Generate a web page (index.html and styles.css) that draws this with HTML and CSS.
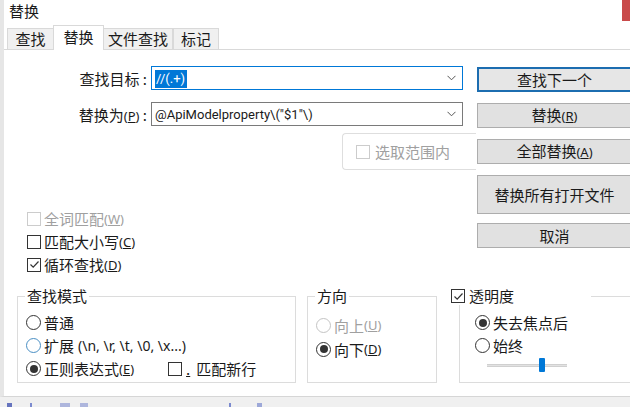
FILE: index.html
```html
<!DOCTYPE html>
<html lang="zh-CN">
<head>
    <meta charset="UTF-8">
    <title>替换</title>
    <link rel="stylesheet" href="styles.css">
</head>
<body>
    <div class="dialog">
        <!-- Title -->
        <div class="titlebar">
            <span class="title">替换</span>
            <span class="close"></span>
        </div>

        <!-- Tabs -->
        <div class="tabs">
            <div class="tab tab-find">查找</div>
            <div class="tab tab-replace active">替换</div>
            <div class="tab tab-files">文件查找</div>
            <div class="tab tab-mark">标记</div>
        </div>

        <div class="panel">
            <div class="main">
                <div class="left">
                    <div class="fields">
                        <div class="field">
                            <label class="field-label">查找目标 :</label>
                            <div class="combo focus">
                                <span class="combo-text"><span class="sel">//(.+)</span></span>
                                <svg class="chevron" width="9" height="6" viewBox="0 0 9 6"><path d="M0.5 0.8 L4.5 4.8 L8.5 0.8" fill="none" stroke="#555" stroke-width="1"/></svg>
                            </div>
                        </div>
                        <div class="field">
                            <label class="field-label">替换为<span class="key">(<u>P</u>)</span> :</label>
                            <div class="combo">
                                <span class="combo-text">@ApiModelproperty\("$1"\)</span>
                                <svg class="chevron" width="9" height="6" viewBox="0 0 9 6"><path d="M0.5 0.8 L4.5 4.8 L8.5 0.8" fill="none" stroke="#555" stroke-width="1"/></svg>
                            </div>
                        </div>
                    </div>

                    <div class="scope">
                        <div class="option disabled"><span class="box"></span>选取范围内</div>
                    </div>

                    <div class="checks">
                        <div class="option disabled"><span class="box"></span>全词匹配<span class="key">(<u>W</u>)</span></div>
                        <div class="option"><span class="box"></span>匹配大小写<span class="key">(<u>C</u>)</span></div>
                        <div class="option"><span class="box checked"><svg width="11" height="11" viewBox="0 0 11 11"><path d="M1.5 5.5 L4.2 8.2 L9.5 2.5" fill="none" stroke="#333" stroke-width="1.2"/></svg></span>循环查找<span class="key">(<u>D</u>)</span></div>
                    </div>
                </div>

                <div class="buttons">
                    <button class="btn default">查找下一个</button>
                    <button class="btn">替换<span class="key">(<u>R</u>)</span></button>
                    <button class="btn">全部替换<span class="key">(<u>A</u>)</span></button>
                    <button class="btn tall">替换所有打开文件</button>
                    <button class="btn cancel">取消</button>
                </div>
            </div>

            <div class="groups">
                <fieldset class="group group-mode">
                    <legend>查找模式</legend>
                    <div class="option"><span class="radio"></span>普通</div>
                    <div class="option"><span class="radio hover"></span>扩展 <span class="hint">(\n, \r, \t, \0, \x...)</span></div>
                    <div class="option">
                        <span class="radio on"></span>正则表达式<span class="key">(<u>E</u>)</span>
                        <span class="newline"><span class="box"></span><u class="dot">.</u>匹配新行</span>
                    </div>
                </fieldset>

                <fieldset class="group group-dir">
                    <legend>方向</legend>
                    <div class="option disabled"><span class="radio"></span>向上<span class="key">(<u>U</u>)</span></div>
                    <div class="option"><span class="radio on"></span>向下<span class="key">(<u>D</u>)</span></div>
                </fieldset>

                <fieldset class="group group-alpha">
                    <legend><span class="box checked"><svg width="11" height="11" viewBox="0 0 11 11"><path d="M1.5 5.5 L4.2 8.2 L9.5 2.5" fill="none" stroke="#333" stroke-width="1.2"/></svg></span>透明度</legend>
                    <div class="option"><span class="radio on"></span>失去焦点后</div>
                    <div class="option"><span class="radio"></span>始终</div>
                    <div class="slider">
                        <div class="track"></div>
                        <div class="thumb"></div>
                    </div>
                </fieldset>
            </div>
        </div>
    </div>

    <div class="statusbar">
        <span class="mark m1"></span>
        <span class="mark m2"></span>
        <span class="mark m3"></span>
        <span class="mark m4"></span>
        <span class="mark m5"></span>
        <span class="mark m6"></span>
    </div>
</body>
</html>
```

FILE: styles.css
```css
* {
    box-sizing: border-box;
}

body {
    margin: 0;
    width: 630px;
    height: 407px;
    overflow: hidden;
    background: #fff;
    color: #1a1a1a;
    font-family: "Noto Sans CJK SC", "Noto Sans", sans-serif;
    font-size: 15px;
}

.dialog {
    height: 397px;
    border-left: 4px solid #e6e6e6;
    border-bottom: 1px solid #d6d6d6;
}

/* title */
.titlebar {
    height: 25px;
    display: flex;
    align-items: flex-start;
}

.title {
    padding: 1px 0 0 5px;
    line-height: 20px;
}

.close {
    margin-left: auto;
    width: 8px;
    height: 21px;
    background: #c94a4a;
}

/* tabs */
.tabs {
    display: flex;
    align-items: flex-end;
    height: 25px;
    padding-left: 3px;
    border-bottom: 1px solid #d9d9d9;
}

.tab {
    height: 21px;
    border: 1px solid #d9d9d9;
    border-bottom: none;
    background: #f0f0f0;
    text-align: center;
    line-height: 19px;
}

.tab-find { width: 47px; }
.tab-replace { width: 51px; }
.tab-files { width: 70px; }
.tab-mark { width: 46px; }

.tab.active {
    height: 25px;
    margin: 0 -1px -1px;
    background: #fff;
    line-height: 21px;
    position: relative;
}

/* top area */
.panel {
    padding-top: 16px;
}

.main {
    display: flex;
}

.left {
    width: 472px;
    flex-shrink: 0;
}

.fields {
    display: flex;
    flex-direction: column;
    gap: 12px;
}

.field {
    display: flex;
    align-items: center;
    height: 24px;
}

.field-label {
    width: 147px;
    padding-right: 4px;
    text-align: right;
    white-space: nowrap;
}

.combo {
    width: 312px;
    height: 24px;
    display: flex;
    align-items: center;
    padding: 0 5px 0 3px;
    border: 1px solid #7a7a7a;
    font-family: Roboto, "Noto Sans", sans-serif;
    font-size: 13px;
}

.combo.focus {
    border-color: #0078d7;
}

.combo-text {
    flex: 1;
    white-space: nowrap;
}

.sel {
    background: #0078d7;
    color: #fff;
    padding: 1px 2px 2px 1px;
}

.chevron {
    margin-right: 1px;
}

.key {
    font-family: "Noto Sans", sans-serif;
    font-size: 13px;
}

.scope {
    margin: 7px 0 0 auto;
    width: 134px;
    height: 37px;
    display: flex;
    align-items: center;
    padding-left: 13px;
    border: 1px solid #dedede;
    border-right: none;
    border-radius: 4px 0 0 4px;
}

.scope .box {
    margin-right: 5px;
}

.checks {
    margin-top: 37px;
    padding-left: 23px;
}

/* options */
.option {
    display: flex;
    align-items: center;
    height: 23px;
    white-space: nowrap;
}

.option.disabled {
    color: #a0a0a0;
}

.box {
    width: 14px;
    height: 14px;
    margin-right: 3px;
    border: 1px solid #333;
    background: #fff;
    display: inline-flex;
    align-items: center;
    justify-content: center;
    flex-shrink: 0;
}

.disabled .box {
    border-color: #cccccc;
}

.radio {
    width: 15px;
    height: 15px;
    margin-right: 3px;
    border: 1px solid #333;
    border-radius: 50%;
    display: inline-flex;
    align-items: center;
    justify-content: center;
    flex-shrink: 0;
}

.radio.on::after {
    content: "";
    width: 8px;
    height: 8px;
    border-radius: 50%;
    background: #333;
}

.radio.hover {
    border-color: #4a8fc4;
}

.disabled .radio {
    border-color: #c4c4c4;
}

.hint {
    margin-left: 4px;
    font-family: "Noto Sans", sans-serif;
    font-size: 14px;
}

.newline {
    display: inline-flex;
    align-items: center;
    margin-left: 34px;
}

.newline .box {
    margin-right: 4px;
}

.dot {
    margin-right: 6px;
}

/* buttons */
.buttons {
    width: 156px;
    flex-shrink: 0;
    padding: 1px 0 0 1px;
    display: flex;
    flex-direction: column;
    gap: 11px;
}

.btn {
    height: 25px;
    padding: 0;
    border: 1px solid #adadad;
    background: #e1e1e1;
    color: #1a1a1a;
    font-family: "Noto Sans CJK SC", "Noto Sans", sans-serif;
    font-size: 15px;
    line-height: 20px;
}

.btn.default {
    border: 2px solid #1c6db0;
    background: #e6e6e6;
}

.btn.tall {
    height: 39px;
}

.btn.cancel {
    margin-top: -2px;
}

/* groups */
.groups {
    display: flex;
    margin-top: 11px;
    padding-left: 13px;
}

.group {
    flex-shrink: 0;
    margin: 0;
    height: 96px;
    padding: 0 0 0 8px;
    border: 1px solid #dcdcdc;
    min-width: 0;
}

/* legend sits inside the fieldset padding, so pull it back */
.group legend {
    margin-left: -1px;
    padding: 0 2px;
    line-height: 18px;
}

.group-mode {
    width: 279px;
    padding-top: 6px;
}

.group-dir {
    width: 130px;
    margin-left: 11px;
    padding-top: 8px;
}

.group-dir .option {
    height: 24px;
}

.group-alpha {
    width: 200px;
    margin-left: 22px;
    padding: 6px 0 0 15px;
}

.group-alpha legend {
    margin-left: -24px;
    width: 140px;
    padding: 0;
    display: flex;
    align-items: center;
}

.group-alpha legend .box {
    margin-right: 4px;
}

.slider {
    position: relative;
    width: 80px;
    height: 14px;
    margin: 1px 0 0 12px;
}

.track {
    position: absolute;
    top: 6px;
    left: 0;
    right: 0;
    height: 3px;
    background: #e2e2e2;
    border: 1px solid #d0d0d0;
    border-width: 1px 0;
}

.thumb {
    position: absolute;
    top: 0;
    left: 52px;
    width: 6px;
    height: 14px;
    background: #0078d7;
    border-radius: 1px;
}

/* bottom strip */
.statusbar {
    height: 10px;
    background: #f0f0f0;
    position: relative;
}

.mark {
    position: absolute;
    bottom: 0;
    height: 4px;
    background: #4a5fc0;
    opacity: 0.7;
}

.m1 { left: 7px; width: 5px; background: #2b3fa8; }
.m2 { left: 30px; width: 2px; }
.m3 { left: 60px; width: 10px; opacity: 0.4; }
.m4 { left: 80px; width: 8px; opacity: 0.4; }
.m5 { left: 229px; width: 2px; }
.m6 { left: 257px; width: 5px; opacity: 0.5; }
```
